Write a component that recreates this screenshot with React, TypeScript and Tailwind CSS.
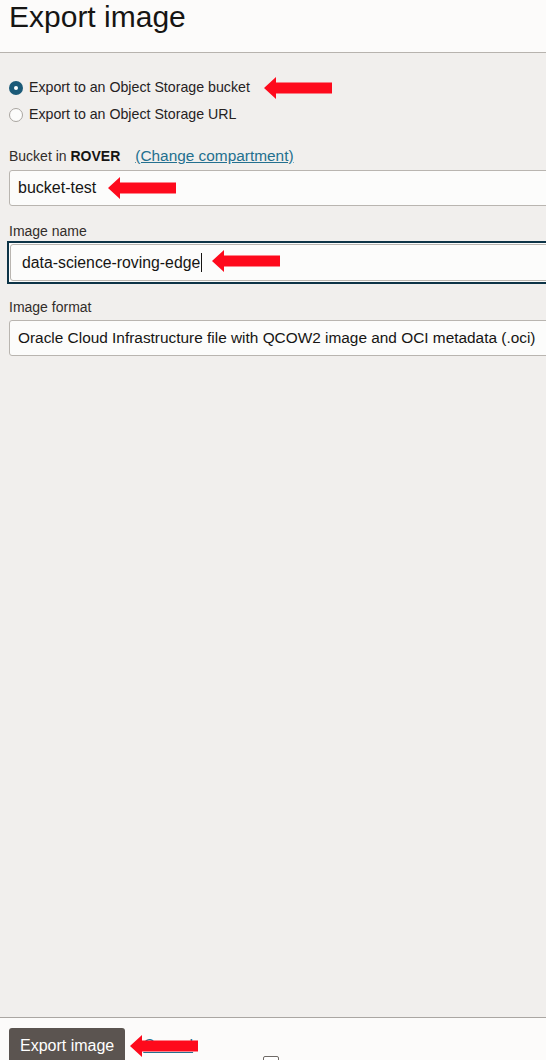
import React from "react";

function Arrow({ left, top }: { left: number; top: number }) {
  return (
    <svg
      className="absolute"
      style={{ left, top }}
      width="68"
      height="22"
      viewBox="0 0 68 22"
    >
      <polygon
        points="0,11 12,0 12,5.5 68,5.5 68,16.5 12,16.5 12,22"
        fill="#fe0a1c"
      />
    </svg>
  );
}

export default function App() {
  return (
    <div className="relative flex h-[1060px] w-[546px] flex-col overflow-hidden bg-[#f1efed] font-['Liberation_Sans',Arial,sans-serif] text-[#161513]">
      {/* Header */}
      <div className="h-[53px] shrink-0 border-b border-[#b7b3ae] bg-[#fcfbfa] pl-[9px] pt-[2px]">
        <h1 className="text-[30px] leading-[30px] font-normal text-[#161513]">Export image</h1>
      </div>

      {/* Main */}
      <div className="flex-1 pl-[9px] pt-[21px]">
        <div className="flex h-[27px] items-center gap-[6px] text-[14.2px] text-[#26221f]">
          <span className="flex h-[14px] w-[14px] items-center justify-center rounded-full bg-[#1b5a78]">
            <span className="h-[4px] w-[4px] rounded-full bg-white" />
          </span>
          <span>Export to an Object Storage bucket</span>
        </div>
        <div className="flex h-[27px] items-center gap-[6px] text-[14.2px] text-[#26221f]">
          <span className="h-[14px] w-[14px] rounded-full border border-[#a9a5a0] bg-[#fcfcfb]" />
          <span>Export to an Object Storage URL</span>
        </div>

        <div className="mt-[18px] flex h-[20px] items-center text-[14px] leading-[20px] text-[#312d2a]">
          <span>
            Bucket in <span className="font-bold text-[#161513]">ROVER</span>
          </span>
          <span className="ml-[15px] text-[15.4px] text-[#24708f] underline">(Change compartment)</span>
        </div>
        <div className="mt-[4px] flex h-[36px] w-[560px] items-center rounded-[3px] border border-[#b9b5b0] bg-[#fcfcfb] pl-[8px] text-[16px]">
          bucket-test
        </div>

        <div className="mt-[15px] h-[20px] text-[14px] leading-[20px] text-[#312d2a]">Image name</div>
        <div className="-ml-[2px] w-[560px] border-2 border-[#0d3447] bg-[#fcfcfb] p-[1px]">
          <div className="flex h-[37px] items-center rounded-[3px] border border-[#b9b5b0] bg-[#fcfcfb] pl-[11px] text-[15.8px]">
            <span>data-science-roving-edge</span>
            <span className="ml-[1px] h-[19px] w-[1px] bg-[#161513]" />
          </div>
        </div>

        <div className="mt-[13px] h-[20px] text-[14px] leading-[20px] text-[#312d2a]">Image format</div>
        <div className="mt-[3px] flex h-[36px] w-[560px] items-center rounded-[3px] border border-[#b9b5b0] bg-[#fcfcfb] pl-[8px] text-[15.4px] whitespace-nowrap">
          Oracle Cloud Infrastructure file with QCOW2 image and OCI metadata (.oci)
        </div>
      </div>

      {/* Footer */}
      <div className="flex h-[43px] shrink-0 items-start border-t border-[#aaa6a2] bg-[#fcfbfa] pl-[9px] pt-[10px]">
        <div className="flex h-[36px] shrink-0 items-center rounded-[3px] bg-[#5b5450] px-[11px] text-[16px] text-white">
          Export image
        </div>
        <div className="ml-[18px] mt-[6px] shrink-0 text-[16px] text-[#24708f] underline">Cancel</div>
        <div className="ml-[70px] mt-[28px] h-[16px] w-[16px] shrink-0 rounded-[2px] border border-[#6f6a66] bg-white" />
      </div>

      <Arrow left={264} top={77} />
      <Arrow left={108} top={177} />
      <Arrow left={212} top={250} />
      <Arrow left={130} top={1035} />
    </div>
  );
}
